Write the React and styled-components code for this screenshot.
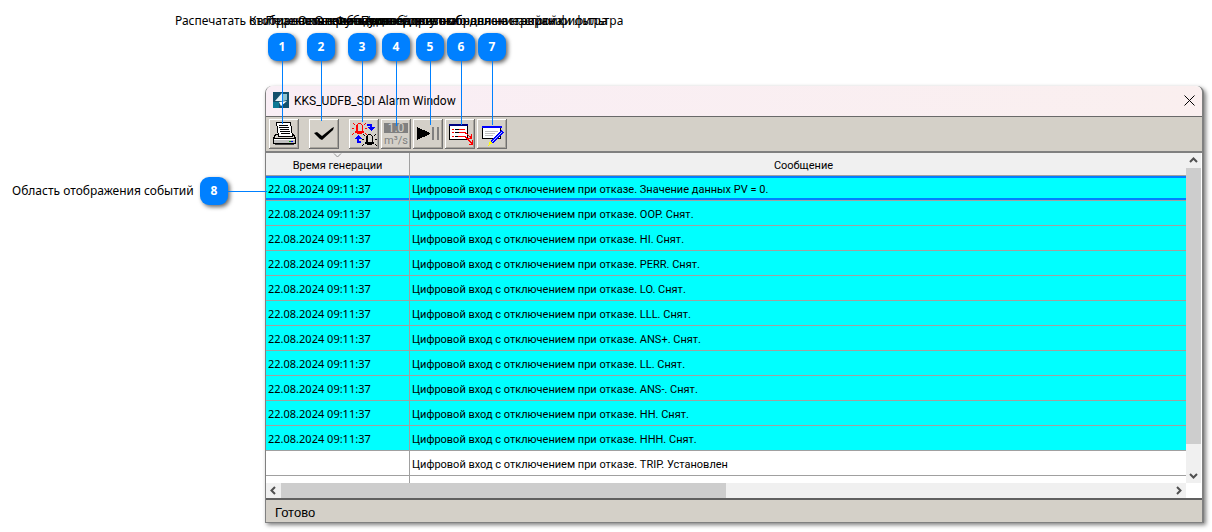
import React from 'react';
import styled, { createGlobalStyle } from 'styled-components';

const GlobalStyle = createGlobalStyle`
  body {
    margin: 0;
    background: #ffffff;
    color: #000000;
    font-family: 'Noto Sans', 'Open Sans', sans-serif;
  }

  * {
    box-sizing: border-box;
  }
`;

const Page = styled.main`
  position: relative;
  padding: 86px 8px 8px 265px;
`;

const AlarmWindow = styled.section`
  border: 1px solid #808080;
  border-top: 0;
  border-right-width: 2px;
  border-radius: 7px 7px 0 0;
  box-shadow: 2px 2px 4px rgba(0, 0, 0, 0.5);
  background: #ffffff;
`;

const TitleBar = styled.header`
  display: flex;
  align-items: center;
  gap: 5px;
  height: 31px;
  padding: 0 7px 2px;
  border-bottom: 1px solid #696969;
  border-radius: 7px 7px 0 0;
  background: linear-gradient(90deg, #f9eef5, #faefef);
`;

const Title = styled.h1`
  flex: 1;
  margin: 0;
  padding-top: 2px;
  font-family: Roboto, sans-serif;
  font-size: 12px;
  font-weight: 400;
  line-height: 16px;
`;

const CloseButton = styled.button`
  display: flex;
  padding: 0;
  border: 0;
  background: none;
`;

const Toolbar = styled.div`
  display: flex;
  gap: 10px;
  padding: 2px 3px;
  border-bottom: 2px solid #808080;
  background: #d4d0c8;
`;

const ToolGroup = styled.div`
  display: flex;
  gap: 2px;
`;

const ToolButton = styled.button`
  display: flex;
  width: 30px;
  height: 30px;
  padding: 0;
  border: 0;
  background: #d4d0c8;
  box-shadow: inset -1px -1px #707070, inset 1px 1px #ffffff, inset -2px -2px #a8a49c;
`;

const Content = styled.div`
  display: grid;
  grid-template-columns: minmax(0, 1fr) 16px;
`;

const Viewport = styled.div`
  overflow: hidden;
`;

const EventTable = styled.table`
  width: calc(100% + 12px);
  table-layout: fixed;
  border-collapse: separate;
  border-spacing: 0;
  font-size: 11px;
  line-height: 16px;
`;

const HeadCell = styled.th`
  width: ${({ $width }) => $width || 'auto'};
  height: 23px;
  padding: 0 0 2px;
  border-right: 1px solid #a0a0a0;
  border-bottom: 1px solid #a0a0a0;
  background: #f0f0f0;
  font-family: Roboto, sans-serif;
  font-weight: 400;
  line-height: 15px;
  vertical-align: bottom;

  svg {
    display: block;
    margin: 0 auto;
  }
`;

const Cell = styled.td`
  height: 25px;
  padding: 2px 2px 0;
  border-right: 1px solid #a0a0a0;
  border-bottom: 1px solid #a0a0a0;
  background: ${({ $active }) => ($active ? '#00ffff' : '#ffffff')};
  box-shadow: ${({ $selected }) => ($selected ? 'inset 0 2px #0080ff, inset 0 -2px #0080ff' : 'none')};
  white-space: nowrap;
`;

const MessageCell = styled(Cell)`
  padding-top: 3px;
  font-family: Roboto, sans-serif;
`;

const FillerCell = styled.td`
  height: 7px;
  padding: 0;
  border-right: 1px solid #a0a0a0;
`;

const ScrollBar = styled.div`
  display: flex;
  flex-direction: ${({ $vertical }) => ($vertical ? 'column' : 'row')};
  border-right: ${({ $vertical }) => ($vertical ? '1px solid #ffffff' : '0')};
  background: #f0f0f0;
`;

const ScrollButton = styled.button`
  display: flex;
  align-items: center;
  justify-content: center;
  flex: none;
  width: 15px;
  height: 15px;
  padding: 0;
  border: 0;
  background: #f0f0f0;
`;

const ScrollTrack = styled.div`
  flex: 1;
`;

const ScrollThumb = styled.div`
  width: ${({ $width }) => $width};
  height: ${({ $height }) => $height};
  background: #cdcdcd;
`;

const StatusBar = styled.footer`
  padding: 4px 9px 1px;
  border-top: 2px solid #606060;
  background: #d4d0c8;
  font-family: 'Liberation Sans', sans-serif;
  font-size: 13px;
  line-height: 17px;
`;

// callouts lie over the window, anchored to the toolbar buttons
const TopCallout = styled.div`
  position: absolute;
  top: 13px;
  left: ${({ $x }) => $x}px;
  display: flex;
  flex-direction: column;
  align-items: center;
  width: 320px;
  margin-left: -160px;
  pointer-events: none;
`;

const SideCallout = styled.div`
  position: absolute;
  top: 177px;
  left: 12px;
  display: flex;
  align-items: center;
`;

const CalloutLabel = styled.span`
  font-size: 12px;
  line-height: 16px;
  white-space: nowrap;
`;

const SideLabel = styled(CalloutLabel)`
  width: 188px;
`;

const Badge = styled.span`
  width: 28px;
  height: 28px;
  border-radius: 9px;
  background: #0080ff;
  box-shadow: 2px 2px 4px rgba(0, 0, 0, 0.6);
  color: #ffffff;
  font-family: 'Open Sans', sans-serif;
  font-size: 12px;
  font-weight: 700;
  line-height: 28px;
  text-align: center;
`;

const TopBadge = styled(Badge)`
  margin-top: 4px;
`;

const VerticalLine = styled.span`
  width: 1px;
  height: ${({ $length }) => $length}px;
  background: #0080ff;
`;

const HorizontalLine = styled.span`
  width: 39px;
  height: 1px;
  background: #0080ff;
`;

const Glyph = ({ children, smooth }) => (
  <svg width="30" height="30" viewBox="0 0 30 30" fill="none" shapeRendering={smooth ? 'auto' : 'crispEdges'} aria-hidden="true">
    {children}
  </svg>
);

const AppIcon = () => (
  <svg width="16" height="16" viewBox="0 0 16 16" aria-hidden="true">
    <path d="M0 0h16v16H0z" fill="#14506b" />
    <path d="M0 10h6v6H0z" fill="#0d7894" />
    <path d="M9 1v8H2z" fill="#e8f3f6" />
    <path d="M10 2h4v6l-4 1z" fill="#8fc3cf" />
    <path d="M6 10l8-1-6 5z" fill="#ffffff" />
  </svg>
);

const PrintIcon = () => (
  <Glyph>
    <path d="M6.5 15.5l-2 4h22l-2-4z" fill="#d4d0c8" stroke="#000" />
    <path d="M7.5 3.5h14l2 14h-14z" fill="#fff" stroke="#000" />
    <path d="M10 6.5h9M10 8.5h10M11 10.5h9M11 12.5h10M12 14.5h9" stroke="#000" />
    <path d="M4.500 19.500h22v5h-22z" fill="#c0c0c0" stroke="#000" />
    <path d="M5 20.5h21" stroke="#fff" />
    <path d="M6 25.500h19" stroke="#404040" />
    <path d="M20 22.500h2" stroke="#00a000" />
    <path d="M22 22.500h2" stroke="#0000ff" />
  </Glyph>
);

const CheckIcon = () => (
  <Glyph smooth>
    <path d="M5 14l3-1 5 4 10-8 2-1-1 3-11 10-2-1z" fill="#000" />
  </Glyph>
);

// alarm lamp with rays, a rounded dome on a base
const Lamp = ({ x, y, color }) => (
  <g transform={`translate(${x} ${y})`} fill={color}>
    <path d="M-1-5h3v1h-3zM-2-4h1v1h-1zM2-4h1v1h-1zM-3-3h1v6h-1zM-2-3h1v6h-1zM3-3h1v6h-1zM-4 3h9v2h-9zM-2 5h5v1h-5z" />
    <path d="M-7 0h2v1h-2zM6 0h2v1h-2zM-6-5h1v1h-1zM-5-4h1v1h-1zM6-5h1v1h-1zM5-4h1v1h-1zM-6 5h1v1h-1zM-7 6h1v1h-1zM6 5h1v1h-1zM7 6h1v1h-1z" />
  </g>
);

const SwitchIcon = () => (
  <Glyph>
    <Lamp x={10} y={9} color="#ff0000" />
    <Lamp x={20} y={20} color="#000000" />
    <path d="M18 5h5v3h3l-4 4-3-4h2V7h-3z" fill="#0000ff" />
    <path d="M12 24H8v-4H5l4-4 4 4h-3v2h2z" fill="#0000ff" />
  </Glyph>
);

const UnitsIcon = () => (
  <Glyph>
    <path d="M3 4h24v10H3z" fill="#808080" />
    <text x="15" y="13" fill="#d4d0c8" fontFamily="Roboto" fontSize="12" textAnchor="middle">1.0</text>
    <text x="15" y="25" fill="#808080" fontFamily="Roboto" fontSize="11" textAnchor="middle">m³/s</text>
  </Glyph>
);

const PauseIcon = () => (
  <Glyph>
    <path d="M4 8l13 6v1L4 21z" fill="#000" />
    <path d="M19 8h2v13h-2zM24 8h2v13h-2z" fill="#808080" />
  </Glyph>
);

const ListIcon = () => (
  <Glyph>
    <path d="M4.5 6.500h18v14h-18z" fill="#fff" stroke="#000" />
    <path d="M4 6h19" stroke="#000080" strokeWidth="2" />
    <path d="M7 10.500h2M7 13.500h2M7 17.500h2" stroke="#ff0000" />
    <path d="M10 10.500h9M10 13.500h9M10 17.500h4" stroke="#000" />
    <path d="M14 10.500h6M14 13.500h6l6 5M13 17.500h7l7 7M26.500 15v4H23M27.500 21v4H24" stroke="#ff0000" />
  </Glyph>
);

const EditIcon = () => (
  <Glyph>
    <path d="M5.5 8.500h18v11h-18z" fill="#fff" stroke="#000" />
    <path d="M5 8h20" stroke="#0000ff" strokeWidth="2" />
    <path d="M8 12.500h13M8 14.500h10M8 16.500h8" stroke="#c0c0c0" />
    <path d="M24 11l3 2-11 11-3-2z" fill="#0000ff" />
    <path d="M25 13L15 23" stroke="#b0c8ff" />
    <path d="M13 22l3 2-5 3z" fill="#ffff00" />
  </Glyph>
);

const Arrow = ({ d }) => (
  <svg width="9" height="9" viewBox="0 0 9 9" fill="none" stroke="#505050" strokeWidth="2" aria-hidden="true">
    <path d={d} />
  </svg>
);

const callouts = [
  { x: 282, length: 63, text: 'Распечатать отображаемые события' },
  { x: 321, length: 60, text: 'Квитировать сообщения' },
  { x: 362, length: 61, text: 'Переключение звуковой тревоги' },
  { x: 396, length: 65, text: 'Функция недоступна' },
  { x: 430, length: 64, text: 'Остановить/возобновить обновление экрана' },
  { x: 461, length: 64, text: 'Открыть диалоговое окно для настройки фильтра' },
  { x: 492, length: 64, text: 'Подтвердить выбранные настройки фильтра' },
];

const toolGroups = [
  [{ label: 'Распечатать', Icon: PrintIcon }],
  [{ label: 'Квитировать', Icon: CheckIcon }],
  [
    { label: 'Переключение', Icon: SwitchIcon },
    { label: 'Единицы', Icon: UnitsIcon },
    { label: 'Остановить', Icon: PauseIcon },
    { label: 'Открыть', Icon: ListIcon },
    { label: 'Фильтр', Icon: EditIcon },
  ],
];

const time = '22.08.2024 09:11:37';
const prefix = 'Цифровой вход с отключением при отказе. ';

const events = [
  { time, state: 'Значение данных PV = 0.' },
  { time, state: 'OOP. Снят.' },
  { time, state: 'HI. Снят.' },
  { time, state: 'PERR. Снят.' },
  { time, state: 'LO. Снят.' },
  { time, state: 'LLL. Снят.' },
  { time, state: 'ANS+. Снят.' },
  { time, state: 'LL. Снят.' },
  { time, state: 'ANS-. Снят.' },
  { time, state: 'HH. Снят.' },
  { time, state: 'HHH. Снят.' },
  { time: '', state: 'TRIP. Установлен' },
];

const App = () => {
  return (
    <>
      <GlobalStyle />
      <Page>
        <AlarmWindow>
          <TitleBar>
            <AppIcon />
            <Title>KKS_UDFB_SDI Alarm Window</Title>
            <CloseButton aria-label="Закрыть">
              <svg width="11" height="11" viewBox="0 0 11 11" stroke="#000" aria-hidden="true">
                <path d="M.5.5l10 10M10.5.5l-10 10" />
              </svg>
            </CloseButton>
          </TitleBar>
          <Toolbar>
            {toolGroups.map((group, index) => (
              <ToolGroup key={index}>
                {group.map(({ label, Icon }) => (
                  <ToolButton key={label} aria-label={label}>
                    <Icon />
                  </ToolButton>
                ))}
              </ToolGroup>
            ))}
          </Toolbar>
          <Content>
            <Viewport>
              <EventTable>
                <thead>
                  <tr>
                    <HeadCell $width="144px">
                      <svg width="9" height="5" viewBox="0 0 9 5" fill="none" stroke="#909090" aria-hidden="true">
                        <path d="M1 .5l3.5 3.5L8 .5" />
                      </svg>
                      Время генерации
                    </HeadCell>
                    <HeadCell>Сообщение</HeadCell>
                  </tr>
                </thead>
                <tbody>
                  {events.map((event, index) => (
                    <tr key={event.state}>
                      <Cell $active={event.time !== ''} $selected={index === 0}>{event.time}</Cell>
                      <MessageCell $active={event.time !== ''} $selected={index === 0}>{prefix + event.state}</MessageCell>
                    </tr>
                  ))}
                  <tr>
                    <FillerCell />
                    <FillerCell />
                  </tr>
                </tbody>
              </EventTable>
            </Viewport>
            <ScrollBar $vertical>
              <ScrollButton aria-label="Вверх"><Arrow d="M1 6l3.5-3.5L8 6" /></ScrollButton>
              <ScrollTrack>
                <ScrollThumb $width="100%" $height="92%" />
              </ScrollTrack>
              <ScrollButton aria-label="Вниз"><Arrow d="M1 3l3.5 3.5L8 3" /></ScrollButton>
            </ScrollBar>
            <ScrollBar>
              <ScrollButton aria-label="Влево"><Arrow d="M6 1L2.5 4.5 6 8" /></ScrollButton>
              <ScrollTrack>
                <ScrollThumb $width="50%" $height="100%" />
              </ScrollTrack>
              <ScrollButton aria-label="Вправо"><Arrow d="M3 1l3.5 3.5L3 8" /></ScrollButton>
            </ScrollBar>
          </Content>
          <StatusBar>Готово</StatusBar>
        </AlarmWindow>

        {callouts.map(({ x, length, text }, index) => (
          <TopCallout key={x} $x={x}>
            <CalloutLabel>{text}</CalloutLabel>
            <TopBadge>{index + 1}</TopBadge>
            <VerticalLine $length={length} />
          </TopCallout>
        ))}
        <SideCallout>
          <SideLabel>Область отображения событий</SideLabel>
          <Badge>8</Badge>
          <HorizontalLine />
        </SideCallout>
      </Page>
    </>
  );
};

export default App;
